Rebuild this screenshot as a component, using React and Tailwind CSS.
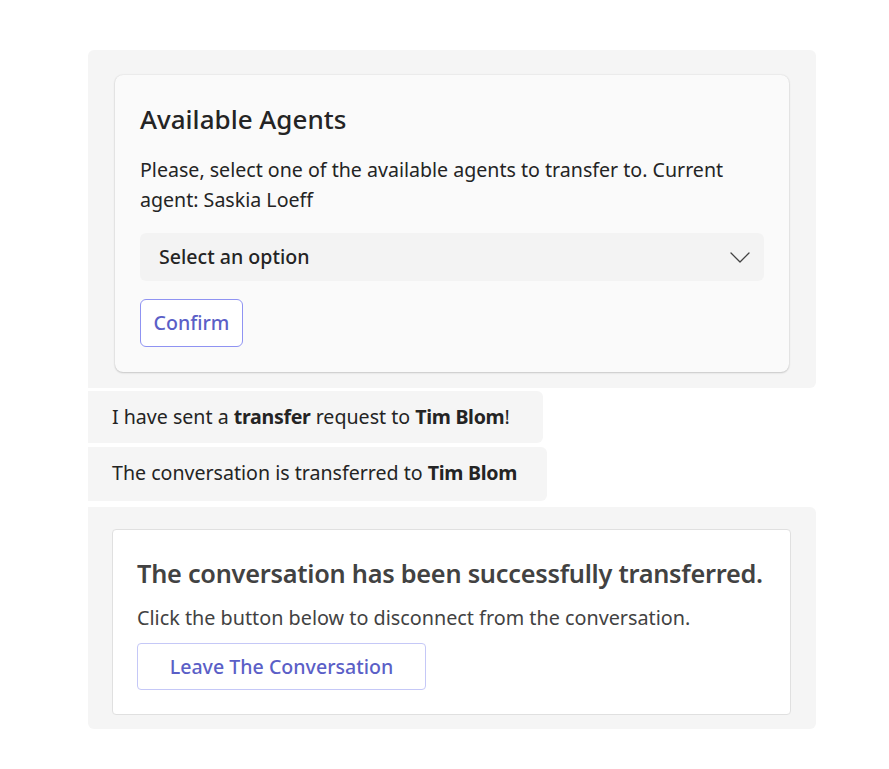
import React from "react";

const font = { fontFamily: '"Noto Sans", "Open Sans", sans-serif' };

function Chevron() {
  return (
    <svg width="20" height="11" viewBox="0 0 20 11" fill="none">
      <path d="M1 1 L10 10 L19 1" stroke="#424242" strokeWidth="1.3" strokeLinejoin="round" strokeLinecap="round" />
    </svg>
  );
}

export default function App() {
  return (
    <div className="min-h-screen bg-white pt-[50px] pl-[88px] text-[#242424]" style={font}>
      <div className="w-[728px]">
        {/* Bubble 1 */}
        <div className="bg-[#f5f5f5] rounded-tl-[6px] rounded-r-[6px] pt-[25px] pl-[27px] pr-[27px] pb-[16px]">
          <div className="bg-[#fafafa] rounded-[8px] shadow-[0_1px_2px_rgba(0,0,0,0.16),0_0_2px_rgba(0,0,0,0.12)] px-[25px] pt-[27px] pb-[25px]">
            <div className="text-[26px] leading-[34px] font-medium">Available Agents</div>
            <div className="mt-[19px] text-[19.6px] leading-[30px]">
              Please, select one of the available agents to transfer to. Current agent: Saskia Loeff
            </div>
            <div className="mt-[18px] h-[48px] bg-[#f3f3f3] rounded-[6px] flex items-center justify-between pl-[19px] pr-[14px]">
              <span className="text-[19.6px] font-medium">Select an option</span>
              <Chevron />
            </div>
            <button className="mt-[18px] h-[48px] w-[103px] border border-[#8f93f2] rounded-[6px] bg-white text-[#5b5fc7] text-[19.6px] font-medium flex items-center justify-center">
              Confirm
            </button>
          </div>
        </div>

        {/* Bubble 2 */}
        <div className="mt-[3px] w-[455px] bg-[#f5f5f5] rounded-r-[6px] px-[24px] py-[11px] text-[19.6px] leading-[30px] whitespace-nowrap">
          I have sent a <b className="font-bold tracking-[-0.3px]">transfer</b> request to <b className="font-bold tracking-[-0.3px]">Tim Blom</b>!
        </div>

        {/* Bubble 3 */}
        <div className="mt-[4px] w-[459px] bg-[#f5f5f5] rounded-r-[6px] px-[24px] pt-[11px] pb-[13px] text-[19.6px] leading-[30px] whitespace-nowrap">
          The conversation is transferred to <b className="font-bold tracking-[-0.3px]">Tim Blom</b>
        </div>

        {/* Bubble 4 */}
        <div className="mt-[6px] bg-[#f5f5f5] rounded-b-[6px] rounded-tr-[6px] pt-[22px] pl-[24px] pr-[25px] pb-[14px]">
          <div className="bg-white border border-[#e0e0e0] rounded-[4px] px-[24px] pt-[25px] pb-[24px] text-[#424242]">
            <div className="text-[25.3px] leading-[36px] font-semibold tracking-[-0.25px] whitespace-nowrap">The conversation has been successfully transferred.</div>
            <div className="mt-[12px] text-[19.8px] leading-[30px] whitespace-nowrap">Click the button below to disconnect from the conversation.</div>
            <button className="mt-[10px] h-[47px] w-[289px] border border-[#c5c8f7] rounded-[4px] bg-white text-[#5b5fc7] text-[19.6px] font-medium flex items-center justify-center">
              Leave The Conversation
            </button>
          </div>
        </div>
      </div>
    </div>
  );
}
